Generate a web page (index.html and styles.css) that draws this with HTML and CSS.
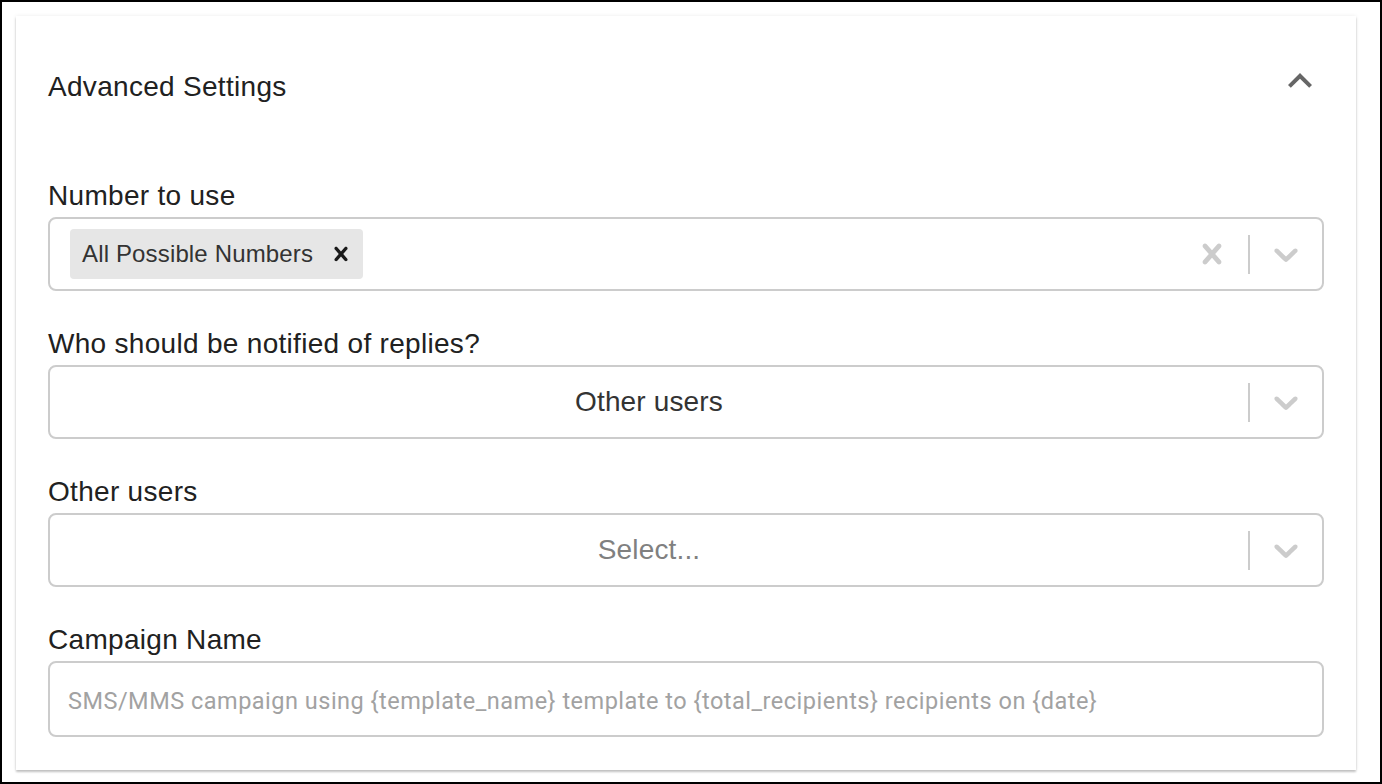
FILE: index.html
```html
<!DOCTYPE html>
<html lang="en">
<head>
<meta charset="utf-8">
<title>Advanced Settings</title>
<link rel="stylesheet" href="styles.css">
</head>
<body>
<div class="frame">
  <section class="card">
    <header class="panel-head">
      <h2 class="panel-title">Advanced Settings</h2>
      <svg class="expand-icon" viewBox="0 0 24 24" width="48" height="48" aria-hidden="true">
        <path d="M12 8l-6 6 1.41 1.41L12 10.83l4.59 4.58L18 14z"/>
      </svg>
    </header>

    <div class="fields">
      <div class="field">
        <label class="field-label">Number to use</label>
        <div class="select">
          <div class="select-values multi">
            <div class="chip">
              <span class="chip-label">All Possible Numbers</span>
              <span class="chip-remove">
                <svg viewBox="0 0 20 20" width="28" height="28" aria-hidden="true"><path d="M14.348 14.849c-0.469 0.469-1.229 0.469-1.697 0l-2.651-3.030-2.651 3.029c-0.469 0.469-1.229 0.469-1.697 0-0.469-0.469-0.469-1.229 0-1.697l2.758-3.15-2.759-3.152c-0.469-0.469-0.469-1.228 0-1.697s1.228-0.469 1.697 0l2.652 3.031 2.651-3.031c0.469-0.469 1.228-0.469 1.697 0s0.469 1.229 0 1.697l-2.758 3.152 2.758 3.15c0.469 0.469 0.469 1.229 0 1.698z"/></svg>
              </span>
            </div>
          </div>
          <div class="indicators">
            <span class="indicator">
              <svg viewBox="0 0 20 20" width="40" height="40" aria-hidden="true"><path d="M14.348 14.849c-0.469 0.469-1.229 0.469-1.697 0l-2.651-3.030-2.651 3.029c-0.469 0.469-1.229 0.469-1.697 0-0.469-0.469-0.469-1.229 0-1.697l2.758-3.15-2.759-3.152c-0.469-0.469-0.469-1.228 0-1.697s1.228-0.469 1.697 0l2.652 3.031 2.651-3.031c0.469-0.469 1.228-0.469 1.697 0s0.469 1.229 0 1.697l-2.758 3.152 2.758 3.15c0.469 0.469 0.469 1.229 0 1.698z"/></svg>
            </span>
            <span class="separator"></span>
            <span class="indicator">
              <svg viewBox="0 0 20 20" width="40" height="40" aria-hidden="true"><path d="M4.516 7.548c0.436-0.446 1.043-0.481 1.576 0l3.908 3.747 3.908-3.747c0.533-0.481 1.141-0.446 1.574 0 0.436 0.445 0.408 1.197 0 1.615-0.406 0.418-4.695 4.502-4.695 4.502-0.217 0.223-0.502 0.335-0.787 0.335s-0.57-0.112-0.789-0.335c0 0-4.287-4.084-4.695-4.502s-0.436-1.17 0-1.615z"/></svg>
            </span>
          </div>
        </div>
      </div>

      <div class="field">
        <label class="field-label">Who should be notified of replies?</label>
        <div class="select">
          <div class="select-values"><span class="single-value">Other users</span></div>
          <div class="indicators">
            <span class="separator"></span>
            <span class="indicator">
              <svg viewBox="0 0 20 20" width="40" height="40" aria-hidden="true"><path d="M4.516 7.548c0.436-0.446 1.043-0.481 1.576 0l3.908 3.747 3.908-3.747c0.533-0.481 1.141-0.446 1.574 0 0.436 0.445 0.408 1.197 0 1.615-0.406 0.418-4.695 4.502-4.695 4.502-0.217 0.223-0.502 0.335-0.787 0.335s-0.57-0.112-0.789-0.335c0 0-4.287-4.084-4.695-4.502s-0.436-1.17 0-1.615z"/></svg>
            </span>
          </div>
        </div>
      </div>

      <div class="field">
        <label class="field-label">Other users</label>
        <div class="select">
          <div class="select-values"><span class="placeholder">Select...</span></div>
          <div class="indicators">
            <span class="separator"></span>
            <span class="indicator">
              <svg viewBox="0 0 20 20" width="40" height="40" aria-hidden="true"><path d="M4.516 7.548c0.436-0.446 1.043-0.481 1.576 0l3.908 3.747 3.908-3.747c0.533-0.481 1.141-0.446 1.574 0 0.436 0.445 0.408 1.197 0 1.615-0.406 0.418-4.695 4.502-4.695 4.502-0.217 0.223-0.502 0.335-0.787 0.335s-0.57-0.112-0.789-0.335c0 0-4.287-4.084-4.695-4.502s-0.436-1.17 0-1.615z"/></svg>
            </span>
          </div>
        </div>
      </div>

      <div class="field">
        <label class="field-label">Campaign Name</label>
        <input class="text-input" type="text" placeholder="SMS/MMS campaign using {template_name} template to {total_recipients} recipients on {date}">
      </div>
    </div>
  </section>
</div>
</body>
</html>
```

FILE: styles.css
```css
html, body {
  margin: 0;
  padding: 0;
  background: #ffffff;
}

.frame {
  box-sizing: border-box;
  width: 1382px;
  height: 784px;
  border: 2px solid #000;
  padding: 14px 0 0 14px;
  background: #ffffff;
  overflow: hidden;
}

.card {
  box-sizing: border-box;
  width: 1340px;
  height: 754px;
  padding: 0 32px 33px 32px;
  background: #fff;
  box-shadow: 0 2px 2px rgba(0, 0, 0, 0.22), 0 0 4px rgba(0, 0, 0, 0.08);
  font-family: "Liberation Sans", Arial, sans-serif;
  color: #212121;
}

.panel-head {
  display: flex;
  justify-content: space-between;
  align-items: flex-start;
  height: 128px;
}

.panel-title {
  margin: 55px 0 0 0;
  font-size: 28px;
  line-height: 32px;
  font-weight: normal;
  letter-spacing: 0.3px;
  color: #212121;
}

.expand-icon {
  margin-top: 41px;
  fill: #666666;
}

.fields {
  display: flex;
  flex-direction: column;
  gap: 37px;
  margin-top: 36px;
}

.field {
  display: flex;
  flex-direction: column;
}

.field-label {
  font-size: 28px;
  line-height: 32px;
  letter-spacing: 0.3px;
  color: #212121;
  margin-bottom: 5px;
}

.select {
  box-sizing: border-box;
  height: 74px;
  border: 2px solid #cccccc;
  border-radius: 8px;
  display: flex;
  align-items: center;
  background: #fff;
}

.select-values {
  flex: 1;
  display: flex;
  align-items: center;
  justify-content: center;
  padding: 0 16px;
  height: 100%;
}

.select-values.multi {
  justify-content: flex-start;
}

.single-value {
  font-size: 28px;
  letter-spacing: 0.15px;
  color: #333333;
}

.placeholder {
  font-size: 28px;
  letter-spacing: 0.15px;
  color: #808080;
}

.chip {
  display: flex;
  align-items: center;
  height: 50px;
  margin: 0 4px;
  background: #e6e6e6;
  border-radius: 4px;
}

.chip-label {
  font-size: 24px;
  letter-spacing: 0.15px;
  color: #333333;
  padding: 0 6px 0 12px;
}

.chip-remove {
  display: flex;
  align-items: center;
  padding: 0 8px;
  fill: #1a1a1a;
}

.indicators {
  display: flex;
  align-items: center;
  height: 100%;
}

.indicator {
  display: flex;
  padding: 0 16px;
  fill: #cccccc;
}

.separator {
  width: 2px;
  height: 39px;
  background: #cccccc;
}

.text-input {
  box-sizing: border-box;
  height: 76px;
  width: 100%;
  border: 2px solid #cccccc;
  border-radius: 8px;
  padding: 3px 18px 0 18px;
  font-family: Roboto, "Liberation Sans", sans-serif;
  font-size: 23.5px;
  letter-spacing: 0.5px;
  color: #333;
  background: #fff;
  outline: none;
}

.text-input::placeholder {
  color: #a2a2a2;
}
```
